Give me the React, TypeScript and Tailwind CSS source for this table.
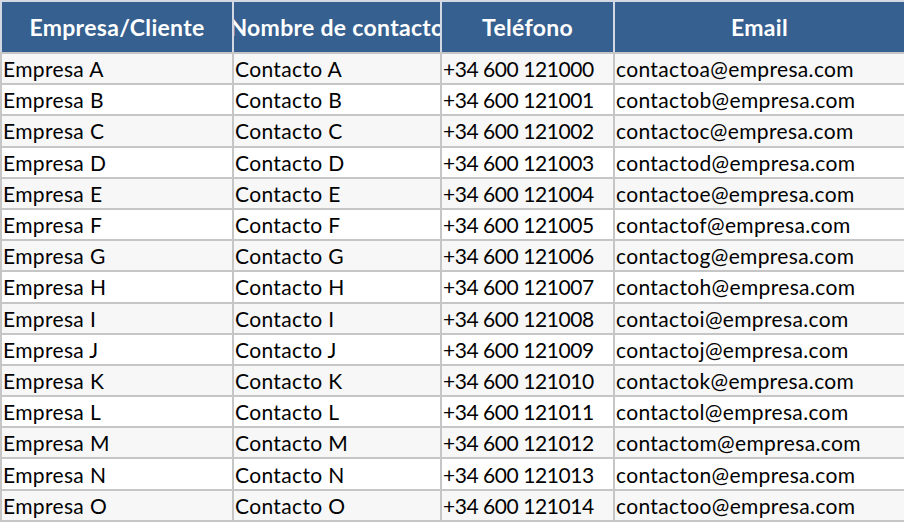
import React from 'react';

const letters = 'ABCDEFGHIJKLMNO'.split('');

const rows = letters.map((l, i) => ({
  company: `Empresa ${l}`,
  contact: `Contacto ${l}`,
  phone: `+34 600 ${121000 + i}`,
  email: `contacto${l.toLowerCase()}@empresa.com`,
}));

const headers = ['Empresa/Cliente', 'Nombre de contacto', 'Teléfono', 'Email'];

// digits in the source font are narrower, so the phone column gets tighter tracking
const cellTracking = ['tracking-[0.35px]', 'tracking-[0.35px]', 'tracking-[-0.45px]', 'tracking-[0.35px]'];

export default function App() {
  return (
    <div className="w-[904px] h-[523px] bg-white overflow-hidden" style={{ fontFamily: 'Lato, "Liberation Sans", sans-serif' }}>
      <table className="table-fixed border-collapse w-[904px] text-black">
        <colgroup>
          <col className="w-[232px]" />
          <col className="w-[208px]" />
          <col className="w-[173px]" />
          <col className="w-[291px]" />
        </colgroup>
        <thead>
          <tr className="h-[52px]">
            {headers.map((h) => (
              <th key={h} className="border-2 border-[#d3d9e2] border-b-[#c6c6c6] bg-[#36608f] p-0 text-white font-bold text-[23px] tracking-[0.3px]">
                <div className="flex justify-center overflow-hidden whitespace-nowrap">{h}</div>
              </th>
            ))}
          </tr>
        </thead>
        <tbody>
          {rows.map((r, i) => (
            <tr key={r.company} className={`h-[31.2px] ${i % 2 === 0 ? 'bg-[#f7f7f7]' : 'bg-white'}`}>
              {[r.company, r.contact, r.phone, r.email].map((c, j) => (
                <td key={j} className={`border-2 border-[#c6c6c6] px-[1px] py-0 text-[21px] ${cellTracking[j]} leading-none whitespace-nowrap overflow-hidden`}>
                  {c}
                </td>
              ))}
            </tr>
          ))}
        </tbody>
      </table>
    </div>
  );
}
